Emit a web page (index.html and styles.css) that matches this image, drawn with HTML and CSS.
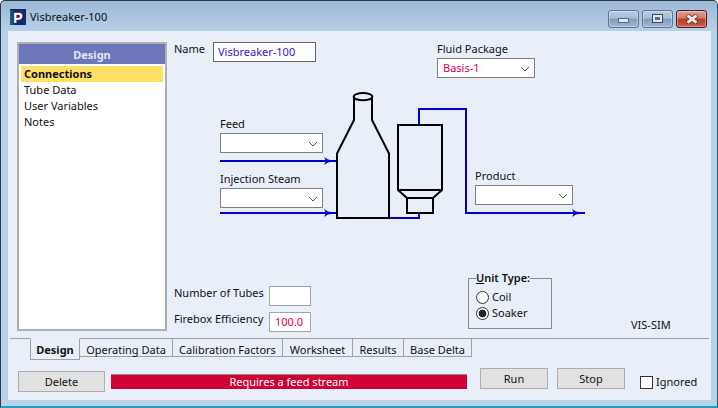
FILE: index.html
```html
<!DOCTYPE html>
<html lang="en">
<head>
<meta charset="utf-8">
<title>Visbreaker-100</title>
<link rel="stylesheet" href="styles.css">
</head>
<body>
<div class="window">
  <header class="titlebar">
    <div class="app-icon"><span class="app-icon-letter">P</span></div>
    <div class="title">Visbreaker-100</div>
    <div class="caption-buttons">
      <div class="cap-btn"><span class="glyph-min"></span></div>
      <div class="cap-btn"><span class="glyph-max"></span></div>
      <div class="cap-btn cap-close">
        <svg width="16" height="10" viewBox="0 0 16 10"><path d="M3 1 L13 9 M13 1 L3 9" stroke="#5a2a22" stroke-width="4.4" fill="none"/><path d="M3.5 1.3 L12.5 8.7 M12.5 1.3 L3.5 8.7" stroke="#eceaea" stroke-width="3" fill="none"/></svg>
      </div>
    </div>
  </header>
  <div class="client">
    <div class="main">
      <nav class="sidebar">
        <div class="side-head">Design</div>
        <ul class="side-list">
          <li class="side-item side-active">Connections</li>
          <li class="side-item">Tube Data</li>
          <li class="side-item">User Variables</li>
          <li class="side-item">Notes</li>
        </ul>
      </nav>
      <section class="canvas">
        <svg class="diagram" width="543" height="289" viewBox="167 42 543 289" fill="none">
          <g stroke="#0000c8" stroke-width="2">
            <path d="M220 161 H337"/>
            <path d="M220 213 H337"/>
            <path d="M389 218 H419 V213"/>
            <path d="M419 125 V109 H466 V213 H585" />
          </g>
          <g fill="#0000c8">
            <path d="M324 157 L328 159.5 L336 161 L328 162.5 L324 165 L326 161 Z"/>
            <path d="M324 209 L328 211.5 L336 213 L328 214.5 L324 217 L326 213 Z"/>
            <path d="M572 209 L576 211.5 L584 213 L576 214.5 L572 217 L574 213 Z"/>
          </g>
          <g stroke="#000" stroke-width="2">
            <ellipse cx="363" cy="96.7" rx="9.3" ry="3.6"/>
            <path d="M354 97 V120 L337 153.5 V218 H389 V153.5 L372 120 V97"/>
            <path d="M398 125 H442 V190 H398 Z"/>
            <path d="M398 190 L407 198 H433 L442 190"/>
            <path d="M407 198 V213 H433 V198"/>
          </g>
        </svg>

        <label class="lbl lbl-name">Name</label>
        <div class="box box-name">Visbreaker-100</div>

        <label class="lbl lbl-fluid">Fluid Package</label>
        <div class="combo combo-fluid"><span class="combo-value">Basis-1</span><svg class="chev" width="10" height="6" viewBox="0 0 10 6"><path d="M1 1 L5 5 L9 1" stroke="#555" fill="none"/></svg></div>

        <label class="lbl lbl-feed">Feed</label>
        <div class="combo combo-feed"><svg class="chev" width="10" height="6" viewBox="0 0 10 6"><path d="M1 1 L5 5 L9 1" stroke="#555" fill="none"/></svg></div>

        <label class="lbl lbl-steam">Injection Steam</label>
        <div class="combo combo-steam"><svg class="chev" width="10" height="6" viewBox="0 0 10 6"><path d="M1 1 L5 5 L9 1" stroke="#555" fill="none"/></svg></div>

        <label class="lbl lbl-product">Product</label>
        <div class="combo combo-product"><svg class="chev" width="10" height="6" viewBox="0 0 10 6"><path d="M1 1 L5 5 L9 1" stroke="#555" fill="none"/></svg></div>

        <label class="lbl lbl-tubes">Number of Tubes</label>
        <div class="box-plain box-tubes"></div>
        <label class="lbl lbl-firebox">Firebox Efficiency</label>
        <div class="box-plain box-firebox">100.0</div>

        <fieldset class="group">
          <legend class="group-title"><u>U</u>nit Type:</legend>
          <div class="radio-row"><span class="radio"></span>Coil</div>
          <div class="radio-row"><span class="radio radio-on"></span>Soaker</div>
        </fieldset>

        <div class="lbl lbl-vis">VIS-SIM</div>
      </section>
    </div>
    <div class="tabs">
      <div class="tab tab-active">Design</div>
      <div class="tab tab-op">Operating Data</div>
      <div class="tab tab-cal">Calibration Factors</div>
      <div class="tab tab-work">Worksheet</div>
      <div class="tab tab-res">Results</div>
      <div class="tab tab-base">Base Delta</div>
    </div>
    <footer class="footer">
      <div class="btn btn-delete">Delete</div>
      <div class="status">Requires a feed stream</div>
      <div class="btn btn-run">Run</div>
      <div class="btn btn-stop">Stop</div>
      <div class="ignored"><span class="check"></span>Ignored</div>
    </footer>
  </div>
</div>
</body>
</html>
```
FILE: styles.css
```css
* { box-sizing: border-box; }
html, body { margin: 0; padding: 0; background: #fff; }
body { width: 718px; height: 408px; overflow: hidden; font-family: "Noto Sans", "Liberation Sans", sans-serif; font-size: 11px; color: #111; }

.window {
  width: 718px; height: 408px;
  display: flex; flex-direction: column;
  border: 1px solid #2c3a44; border-bottom: 2px solid #1fa0b8; border-right-color: #1f5a68;
  border-radius: 5px 5px 0 0;
  background: linear-gradient(#9cb8d6 0, #b9d1ea 31px);
  padding: 0 6px 6px 7px;
}

.titlebar { height: 30px; display: flex; align-items: center; flex: none; }
.app-icon { width: 16px; height: 16px; margin-left: 2px; margin-top: 2px; background: linear-gradient(90deg, #0a6a8a 0, #0c2c6e 35%); border-top: 1px solid #0a2458; display: flex; align-items: center; justify-content: center; }
.app-icon-letter { color: #fff; font: bold 14px/14px "Liberation Sans", sans-serif; text-shadow: 0 -1px 0 #c8202c; }
.title { margin-left: 4px; margin-top: 1px; font-size: 11px; color: #0c0c0c; }
.caption-buttons { margin-left: auto; display: flex; gap: 3px; margin-top: 5px; margin-right: 4px; }
.cap-btn { width: 31px; height: 18px; border: 1px solid #5f7288; border-radius: 3px; background: linear-gradient(#b7cde4 0, #a4bdd8 45%, #7d9cbd 50%, #9db8d4 100%); display: flex; align-items: center; justify-content: center; box-shadow: inset 0 0 0 1px rgba(255,255,255,.35); }
.cap-close { border-color: #4a1c1c; background: linear-gradient(#e2a097 0, #d0776a 45%, #b83a20 50%, #c9604a 100%); }
.glyph-min { width: 11px; height: 5px; margin-top: 3px; background: #e4e6ea; border: 1px solid #56687c; }
.glyph-max { width: 11px; height: 9px; border: 1px solid #3a4a5c; background: #e4e8ee; box-shadow: inset 0 0 0 2px #e4e8ee, inset 0 0 0 4px #5a6c80; }

.client { flex: 1; background: #e8eff9; display: flex; flex-direction: column; min-height: 0; }
.main { display: flex; padding: 11px 0 0 9px; flex: none; height: 300px; }

.sidebar { width: 150px; height: 289px; border: 2px solid #b0b0b0; background: #fff; flex: none; }
.side-head { height: 20px; background: #6d76b8; color: #e4e6f4; font-weight: 700; text-align: center; line-height: 21px; }
.side-list { list-style: none; margin: 2px 0 0; padding: 0 2px; }
.side-item { height: 16px; line-height: 16px; padding-left: 3px; }
.side-active { background: #ffe066; font-weight: 700; }

.canvas { position: relative; flex: 1; }
.diagram { position: absolute; left: 0; top: 0; }

.lbl { position: absolute; white-space: nowrap; line-height: 14px; }
.lbl-name { left: 7px; top: 0; }
.lbl-fluid { left: 270px; top: 0; }
.lbl-feed { left: 53px; top: 75px; }
.lbl-steam { left: 53px; top: 130px; }
.lbl-product { left: 308px; top: 127px; }
.lbl-tubes { left: 7px; top: 244px; }
.lbl-firebox { left: 7px; top: 270px; }
.lbl-vis { left: 464px; top: 276px; }

.box { position: absolute; background: #fff; border: 1px solid #666; line-height: 18px; padding-left: 4px; color: #3a10d0; }
.box-name { left: 46px; top: 0; width: 103px; height: 20px; }

.combo { position: absolute; background: #fff; border: 1px solid #808080; height: 20px; line-height: 18px; padding-left: 5px; display: flex; align-items: center; }
.combo-value { color: #d4004c; }
.chev { position: absolute; right: 4px; top: 7px; }
.combo-fluid { left: 270px; top: 16px; width: 98px; }
.combo-feed { left: 53px; top: 91px; width: 103px; }
.combo-steam { left: 53px; top: 146px; width: 103px; }
.combo-product { left: 308px; top: 143px; width: 98px; }

.box-plain { position: absolute; background: #fff; border: 1px solid #a6a6a6; width: 42px; height: 20px; line-height: 18px; padding-left: 5px; color: #e0003c; }
.box-tubes { left: 102px; top: 244px; }
.box-firebox { left: 102px; top: 270px; }

.group { position: absolute; left: 301px; top: 231px; width: 84px; height: 56px; margin: 0; padding: 0 0 0 7px; border: 1px solid #8c8c8c; }
.group-title { padding: 0; line-height: 10px; font-weight: 600; }
.radio-row { height: 16px; display: flex; align-items: center; gap: 3px; line-height: 16px; }
.group-title + .radio-row { margin-top: 6px; }
.radio { width: 13px; height: 13px; border-radius: 50%; border: 1px solid #333; background: #fff; flex: none; }
.radio-on { background: radial-gradient(circle, #222 0 3.5px, #fff 4.2px); }

.tabs { display: flex; height: 22px; margin: 7px 2px 0; border-top: 1px solid #a0a0a0; padding-left: 20px; flex: none; }
.tab { height: 19px; line-height: 17px; border-right: 1px solid #a0a0a0; border-bottom: 1px solid #a0a0a0; text-align: center; white-space: nowrap; margin-top: -1px; padding-top: 3px; }
.tab-active { width: 50px; height: 22px; font-weight: 700; border-left: 1px solid #a0a0a0; border-top: 1px solid #e8eff9; line-height: 18px; padding-top: 2px; }
.tab-op { width: 93px; }
.tab-cal { width: 110px; }
.tab-work { width: 70px; }
.tab-res { width: 51px; }
.tab-base { width: 68px; }

.footer { display: flex; align-items: flex-start; padding-left: 10px; flex: 1; }
.btn { height: 21px; background: #e1e1e1; border: 1px solid #adadad; text-align: center; line-height: 19px; flex: none; }
.btn-delete { width: 87px; margin-top: 11px; }
.status { width: 356px; height: 15px; margin: 14px 13px 0 6px; background: #d00035; border-top: 1px solid #8a8a8a; color: #fff; text-align: center; line-height: 14px; flex: none; }
.btn-run { width: 68px; margin-top: 8px; margin-right: 9px; }
.btn-stop { width: 68px; margin-top: 8px; }
.ignored { display: flex; align-items: center; gap: 3px; margin: 15px 0 0 15px; line-height: 14px; }
.check { width: 13px; height: 13px; background: #fff; border: 1px solid #333; flex: none; }
```
